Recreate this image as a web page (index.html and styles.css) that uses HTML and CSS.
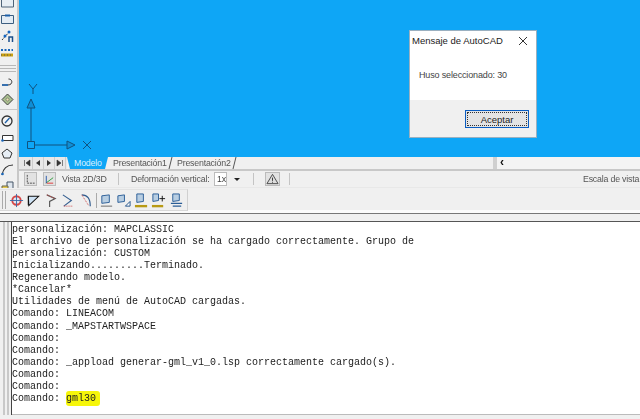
FILE: index.html
```html
<!DOCTYPE html>
<html lang="es">
<head>
<meta charset="utf-8">
<title>AutoCAD</title>
<link rel="stylesheet" href="styles.css">
</head>
<body>
<div class="app">
  <div class="upper">
    <aside class="lefttool">
      <svg class="lefticons" width="18" height="190" viewBox="0 0 18 190">
        <path d="M1.500 -4H13.500V7H1.500Z" fill="#e8eef4" stroke="#50647a"/>
        <path d="M1.500 15.500H13.500V23.500H1.500Z" fill="#e4ecf4" stroke="#3d5e80"/>
        <path d="M5 15.500H10" stroke="#1c5fa8" stroke-width="2"/>
        <path d="M2 40L10 31" stroke="#333" stroke-dasharray="2 1"/>
        <circle cx="5" cy="36" r="1.500" fill="#1565c0"/>
        <circle cx="9" cy="32" r="1.500" fill="#1565c0"/>
        <path d="M9 42V37H12.500V42" fill="none" stroke="#1d4f8a" stroke-width="1.500"/>
        <path d="M1 50H13" stroke="#1b66b8" stroke-width="2" stroke-dasharray="2 1.500"/>
        <path d="M1 55H13" stroke="#caa010" stroke-width="3"/>
        <path d="M1 55H13" stroke="#555" stroke-dasharray="1 2"/>
        <path d="M0 65.500H16M0 68.500H16M0 71.500H16" stroke="#b8b8b8"/>
        <path d="M2 85H8C13 85 13 79 8.500 79" fill="none" stroke="#333"/>
        <path d="M2 85H8" stroke="#1b66b8" stroke-width="1.500"/>
        <path d="M7.500 94L13 99.500L7.500 105L2 99.500Z" fill="#a9bf8f" stroke="#444"/>
        <circle cx="7.500" cy="99.500" r="1.500" fill="#e8e0b0" stroke="#555" stroke-width=".5"/>
        <path d="M0 109.500H17" stroke="#c8c8c8"/>
        <circle cx="7" cy="121" r="5" fill="#f4f4f4" stroke="#333" stroke-width="1.300"/>
        <path d="M5 123L9.500 118" stroke="#1d5fa5" stroke-width="1.300"/>
        <path d="M2.500 135.500H13V140.500H2.500Z" fill="#fff" stroke="#333"/>
        <circle cx="2.500" cy="140.500" r="1.300" fill="#1b66b8"/>
        <path d="M7 149L12 153L10 158H4L2 153Z" fill="#e7eef5" stroke="#333"/>
        <path d="M2 175C3 169 7 165 13 165" fill="none" stroke="#333" stroke-width="1.200"/>
        <circle cx="2.500" cy="174" r="1.300" fill="#1b66b8"/>
        <path d="M7 182H13V190H7Z" fill="#dfe6ee" stroke="#456"/>
        <path d="M2 186H8V190H2Z" fill="#e6c94a" stroke="#665"/>
      </svg>
    </aside>
    <section class="workspace">
      <div class="canvas">
        <svg class="ucs" width="80" height="75" viewBox="0 0 80 75">
          <path d="M12 28V61.500M16 65H48" stroke="#11527f" fill="none"/>
          <path d="M10 4L14 9M18 4L14 9V14" stroke="#11527f" fill="none"/>
          <path d="M12 19L8 28H16Z" stroke="#11527f" fill="#0f8fd6"/>
          <path d="M8.500 61.500H15.500V68.500H8.500Z" stroke="#11527f" fill="none"/>
          <path d="M48 61L56 65L48 69Z" stroke="#11527f" fill="#0f8fd6"/>
          <path d="M64 61L72 69M72 61L64 69" stroke="#11527f"/>
        </svg>
        <div class="dialog">
          <header class="dlg-title">
            <span>Mensaje de AutoCAD</span>
            <svg width="10" height="10" viewBox="0 0 10 10"><path d="M1 1L9 9M9 1L1 9" stroke="#333"/></svg>
          </header>
          <p class="dlg-msg">Huso seleccionado: 30</p>
          <footer class="dlg-foot"><button class="dlg-btn">Aceptar</button></footer>
        </div>
      </div>
      <div class="tabrow">
        <div class="navs">
          <span class="nav"><svg width="8" height="8" viewBox="0 0 8 8"><path d="M1.500 1V7M7 1L3 4L7 7Z" fill="#333" stroke="#333" stroke-width=".6"/></svg></span>
          <span class="nav"><svg width="8" height="8" viewBox="0 0 8 8"><path d="M6 1L2 4L6 7Z" fill="#333"/></svg></span>
          <span class="nav"><svg width="8" height="8" viewBox="0 0 8 8"><path d="M2 1L6 4L2 7Z" fill="#333"/></svg></span>
          <span class="nav"><svg width="8" height="8" viewBox="0 0 8 8"><path d="M6.500 1V7M1 1L5 4L1 7Z" fill="#333" stroke="#333" stroke-width=".6"/></svg></span>
        </div>
        <span class="tab tab-active">Modelo</span>
        <span class="tab">Presentación1</span>
        <span class="tab">Presentación2</span>
        <div class="tabfill"></div>
        <div class="hscroll"><span class="chev">&#8249;</span></div>
      </div>
      <div class="statusrow">
        <span class="st-btn"><svg width="11" height="11" viewBox="0 0 12 12"><path d="M2.500 1V10H11" fill="none" stroke="#444" stroke-dasharray="2 1"/></svg></span>
        <span class="st-btn"><svg width="11" height="11" viewBox="0 0 12 12"><path d="M2 10L10 4" stroke="#2a9a3a"/><path d="M2.500 2V10" stroke="#2355aa"/><path d="M3 10L10 10" stroke="#d33"/></svg></span>
        <span class="st-text st-view">Vista 2D/3D</span>
        <i class="sep"></i>
        <span class="st-text st-def">Deformación vertical:</span>
        <span class="combo">1x</span>
        <span class="arrow"></span>
        <i class="sep sep-a"></i>
        <span class="st-btn warn"><svg width="14" height="12" viewBox="0 0 14 12"><path d="M7 1L13 11H1Z" fill="#ddd" stroke="#444"/><path d="M7 4.500V8M7 9V10" stroke="#333"/></svg></span>
        <i class="sep sep-b"></i>
        <span class="st-text scale">Escala de vista</span>
      </div>
    </section>
  </div>
  <div class="toolrow">
    <div class="toolbar">
      <i class="grip"></i>
      <svg width="16" height="16" viewBox="0 0 16 16"><circle cx="8" cy="8" r="4.500" fill="#dce6f2" stroke="#d64545" stroke-width="2"/><path d="M8 1V15M1 8H15" stroke="#3e6aa5"/></svg>
      <svg width="16" height="16" viewBox="0 0 16 16"><path d="M2.500 3.500H13.500L3 13.500Z" fill="#cfe3f5" stroke="#111" stroke-width="1.100"/><path d="M2.500 4V13" stroke="#111" stroke-width="1.200"/></svg>
      <svg width="16" height="16" viewBox="0 0 16 16"><path d="M3 2L12 6L6 9V15" fill="none" stroke="#555" stroke-width="1.200"/><path d="M3 2L12 6" stroke="#c44" stroke-dasharray="1 1"/></svg>
      <svg width="16" height="16" viewBox="0 0 16 16"><path d="M2 2L11 8L3 14" fill="none" stroke="#345e90" stroke-width="1.200"/><path d="M3 14H13" stroke="#c44" stroke-dasharray="1 1"/></svg>
      <svg width="16" height="16" viewBox="0 0 16 16"><path d="M3 2C9 2 12 6 12 14" fill="none" stroke="#345e90" stroke-width="1.300"/><path d="M3 2L10 13" stroke="#c44" stroke-dasharray="1 1"/></svg>
      <i class="tsep"></i>
      <svg width="16" height="16" viewBox="0 0 16 16"><path d="M3 3L11 2V10L3 11Z" fill="#b8cee2" stroke="#2a5d96"/><path d="M2 14H14" stroke="#666"/></svg>
      <svg width="16" height="16" viewBox="0 0 16 16"><path d="M2 3L9 2V9L2 10Z" fill="#b8cee2" stroke="#2a5d96"/><path d="M10 14L15 9V14Z" fill="#fff" stroke="#1e4f87"/></svg>
      <svg width="16" height="16" viewBox="0 0 16 16"><path d="M3 1L10 1V9L3 10Z" fill="#b8cee2" stroke="#2a5d96"/><path d="M1 14H14" stroke="#b89a14" stroke-width="2.500"/></svg>
      <svg width="16" height="16" viewBox="0 0 16 16"><path d="M2 1L8 1V8L2 9Z" fill="#b8cee2" stroke="#2a5d96"/><path d="M1 14H13" stroke="#b89a14" stroke-width="2.500"/><path d="M9 6H15M12 3V9" stroke="#111"/></svg>
      <svg width="16" height="16" viewBox="0 0 16 16"><path d="M4 1L11 1V8L4 9Z" fill="#b8cee2" stroke="#2a5d96"/><path d="M2 11H14M4 14H13" stroke="#2a5d96" stroke-width="1.300"/></svg>
    </div>
  </div>
  <div class="divider"></div>
  <div class="console">
    <i class="console-grip"></i>
    <pre class="console-text">personalización: MAPCLASSIC
El archivo de personalización se ha cargado correctamente. Grupo de
personalización: CUSTOM
Inicializando.........Terminado.
Regenerando modelo.
*Cancelar*
Utilidades de menú de AutoCAD cargadas.
Comando: LINEACOM
Comando: _MAPSTARTWSPACE
Comando:
Comando:
Comando: _appload generar-gml_v1_0.lsp correctamente cargado(s).
Comando:
Comando:
Comando: <mark class="hl">gml30</mark></pre>
  </div>
</div>
</body>
</html>
```
FILE: styles.css
```css
* { box-sizing: border-box; }
html, body { margin: 0; padding: 0; }
body { width: 640px; height: 419px; overflow: hidden; background: #f0f0f0; font-family: "Liberation Sans", Arial, sans-serif; color: #444; }
.app { display: flex; flex-direction: column; width: 640px; height: 419px; filter: blur(0.35px); }

.upper { display: flex; height: 188px; flex: none; }
.lefttool { width: 19px; flex: none; background: #f0f0f0; border-right: 2px solid #c8c8c8; overflow: hidden; }
.lefticons { display: block; }
.workspace { flex: 1; display: flex; flex-direction: column; min-width: 0; }

.canvas { position: relative; height: 157px; background: #0ea6f6; flex: none; }
.ucs { position: absolute; left: 0; top: 80px; }
.dialog { position: absolute; left: 390px; top: 30px; width: 128px; height: 108px; background: #fff; border: 1px solid #9ab0c0; display: flex; flex-direction: column; }
.dlg-title { display: flex; justify-content: space-between; align-items: center; height: 19px; padding: 0 8px 0 2px; font-size: 9.500px; color: #222; }
.dlg-msg { margin: 0; height: 50px; padding: 20px 0 0 9px; font-size: 9px; letter-spacing: -0.15px; color: #444; }
.dlg-foot { flex: 1; background: #f0f0f0; display: flex; justify-content: flex-end; padding: 10px 7px 0 0; }
.dlg-btn { width: 64px; height: 18px; padding: 0; font: 9.500px "Liberation Sans", Arial, sans-serif; color: #222; background: #e4e4e4; border: 1px solid #0a5cc0; outline: 1px dotted #333; outline-offset: -3px; }

.tabrow { display: flex; align-items: stretch; height: 14px; background: #f0f0f0; border-bottom: 2px solid #c8c8c8; flex: none; }
.navs { display: flex; width: 48px; padding-left: 3px; flex: none; background: #e8e8e8; }
.nav { width: 11px; display: flex; align-items: center; justify-content: center; border-right: 1px solid #ccc; }
.tab { position: relative; width: 64px; flex: none; font-size: 8.800px; letter-spacing: -0.2px; line-height: 12px; color: #555; padding-left: 5px; white-space: nowrap; }
.tab::after { content: ""; position: absolute; right: 1px; top: 0; bottom: 0; width: 1px; background: #555; transform: skewX(-14deg); }
.tab-active { width: 41px; padding-left: 7px; background: #0ea6f6; color: #d8f0ff; clip-path: polygon(0 0, 100% 0, calc(100% - 3px) 100%, 3px 100%); }
.tab-active::after { display: none; }
.tabfill { flex: 1; }
.hscroll { width: 147px; display: flex; background: #f4f4f4; border-left: 4px solid #d0d0d0; flex: none; }
.chev { font-size: 12px; line-height: 11px; margin-left: 3px; color: #111; font-weight: bold; }

.statusrow { display: flex; align-items: center; height: 17px; background: #f0f0f0; border-bottom: 1px solid #e8e8e8; padding-left: 5px; flex: none; font-size: 8.800px; letter-spacing: -0.2px; }
.st-btn { width: 13px; height: 14px; margin-right: 6px; background: #e2e2e2; border: 1px solid #bbb; display: flex; align-items: center; justify-content: center; flex: none; }
.st-text { color: #555; white-space: nowrap; flex: none; }
.st-view { width: 44px; }
.st-def { width: 75px; }
.sep { width: 1px; height: 12px; background: #c4c4c4; margin: 0 12px; flex: none; }
.combo { width: 13px; height: 14px; margin-left: 8px; background: #fff; border: 1px solid #bbb; line-height: 13px; padding-left: 2px; flex: none; }
.arrow { width: 0; height: 0; border: 3px solid transparent; border-top: 3px solid #222; border-bottom: 0; margin-left: 7px; flex: none; }
.sep-a { margin: 0 11px 0 13px; }
.warn { width: 15px; margin-right: 9px; }
.sep-b { margin: 0; }
.scale { margin-left: auto; width: 57px; }

.toolrow { height: 25px; flex: none; display: flex; align-items: stretch; background: #f0f0f0; border-bottom: 3px solid #fbfbfb; }
.toolbar { width: 188px; height: 22px; margin-top: 1px; display: flex; align-items: center; background: #efefef; border-top: 1px solid #e2e2e2; border-right: 1px solid #d0d0d0; border-bottom: 1px solid #d8d8d8; padding-left: 2px; }
.toolbar svg { width: 15px; height: 15px; margin-right: 2.500px; flex: none; }
.grip { width: 4px; height: 18px; margin-right: 2.500px; border-left: 1px solid #aaa; border-right: 1px solid #aaa; flex: none; }
.tsep { width: 1px; height: 15px; background: #aaa; margin-right: 1.500px; flex: none; }

.divider { height: 9px; flex: none; border-top: 1px solid #777; border-bottom: 1px solid #555; background: #f0f0f0; }
.console { flex: 1; display: flex; background: #f0f0f0; min-height: 0; padding-bottom: 4px; }
.console-grip { width: 12px; flex: none; border-right: 1px solid #444; background: linear-gradient(90deg, #f0f0f0 3px, #c8c8c8 3px, #c8c8c8 5px, #f0f0f0 5px, #f0f0f0 7px, #c8c8c8 7px, #c8c8c8 9px, #f0f0f0 9px); }
.console-text { flex: 1; margin: 0; padding: 2px 0 0 0; background: #fff; border-bottom: 1px solid #bbb; font: 10px/12.070px "Liberation Mono", "Courier New", monospace; color: #222; overflow: hidden; }
.hl { background: #f6f60a; color: #222; padding: 2px 4px 2px 0; border-radius: 3px; }
```
